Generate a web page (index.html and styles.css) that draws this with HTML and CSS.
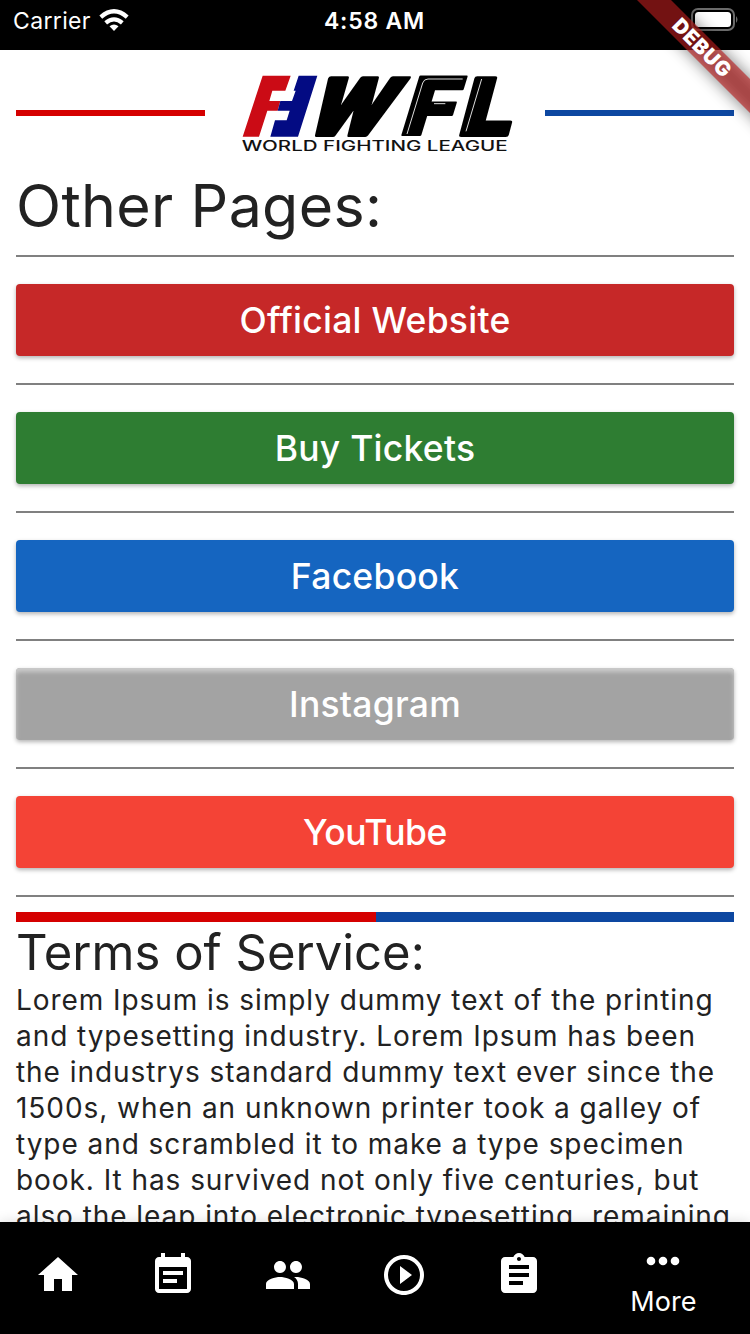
FILE: index.html
```html
<!DOCTYPE html>
<html lang="en">
<head>
<meta charset="utf-8">
<title>World Fighting League</title>
<link rel="stylesheet" href="styles.css">
</head>
<body>
<div class="app">
  <div class="status">
    <div class="carrier"><span>Carrier</span>
      <svg class="wifi" width="30" height="24" viewBox="0 0 30 24"><g fill="none" stroke="#fff" stroke-width="4.3"><path d="M1.800 9.100Q15-2.400 28.200 9.100"/><path d="M6.700 14.800Q15 8 23.300 14.800"/></g><path d="M10.500 18.300Q15 14.700 19.500 18.300L15 23Z" fill="#fff"/></svg>
    </div>
    <div class="time">4:58 AM</div>
    <svg class="battery" width="48" height="24" viewBox="0 0 48 24"><rect x="1" y="1" width="42" height="21" rx="6" fill="none" stroke="#6b6b6b" stroke-width="2"/><rect x="4" y="4" width="36" height="15" rx="3.500" fill="#fff"/><path d="M45 8Q48 11.500 45 15Z" fill="#6b6b6b"/></svg>
  </div>
  <main class="page">
    <header class="brand">
      <div class="rule red"></div>
      <svg class="logo" width="290" height="100" viewBox="0 0 870 300">
        <path d="M98 47H182L166 92H127L118 123H151L143 152H112L87 230H38Z" fill="#cb0b15"/>
        <path d="M206 47H262L204 230H121L135 181H170L179 152H143L151 123H186L197 92H191Z" fill="#030b83"/>
        <g class="mono">
          <text class="heavy" transform="translate(212 224) skewX(-26)" textLength="246" lengthAdjust="spacingAndGlyphs">W</text>
          <text transform="translate(505 226) skewX(-17)" textLength="158" lengthAdjust="spacingAndGlyphs">F</text>
          <text class="heavy" transform="translate(682 224) skewX(-15)" textLength="155" lengthAdjust="spacingAndGlyphs">L</text>
        </g>
        <g class="inline">
          <path d="M698 57H594Q582 57 578 69L531 222"/>
          <path d="M612 131H646"/>
          <path d="M755 57L708 214"/>
        </g>
        <text class="tagline" x="35" y="272" textLength="798" lengthAdjust="spacingAndGlyphs">WORLD FIGHTING LEAGUE</text>
      </svg>
      <div class="rule blue"></div>
    </header>
    <h1>Other Pages:</h1>
    <div class="links">
      <a class="btn website">Official Website</a>
      <a class="btn tickets">Buy Tickets</a>
      <a class="btn facebook">Facebook</a>
      <a class="btn instagram">Instagram</a>
      <a class="btn youtube">YouTube</a>
    </div>
    <div class="split"><i class="red"></i><i class="blue"></i></div>
    <h2>Terms of Service:</h2>
    <p>Lorem Ipsum is simply dummy text of the printing<br>and typesetting industry. Lorem Ipsum has been<br>the industrys standard dummy text ever since the<br>1500s, when an unknown printer took a galley of<br>type and scrambled it to make a type specimen<br>book. It has survived not only five centuries, but<br>also the leap into electronic typesetting, remaining</p>
  </main>
  <nav class="tabs">
    <div class="tab"><svg viewBox="0 0 24 24"><path d="M10 20v-6h4v6h5v-8h3L12 3 2 12h3v8z"/></svg></div>
    <div class="tab"><svg viewBox="0 0 24 24"><path d="M17 10H7v2h10v-2zm2-7h-1V1h-2v2H8V1H6v2H5c-1.110 0-1.990.9-1.990 2L3 19c0 1.100.89 2 2 2h14c1.100 0 2-.9 2-2V5c0-1.100-.9-2-2-2zm0 16H5V8h14v11zm-5-5H7v2h7v-2z"/></svg></div>
    <div class="tab"><svg viewBox="0 0 24 24"><path d="M16 11c1.660 0 2.990-1.340 2.990-3S17.660 5 16 5s-3 1.340-3 3 1.340 3 3 3zm-8 0c1.660 0 2.990-1.340 2.990-3S9.660 5 8 5 5 6.340 5 8s1.340 3 3 3zm0 2c-2.330 0-7 1.170-7 3.500V19h14v-2.500c0-2.330-4.670-3.500-7-3.500zm8 0c-.29 0-.62.020-.97.050 1.160.84 1.970 1.970 1.970 3.450V19h6v-2.500c0-2.330-4.670-3.500-7-3.500z"/></svg></div>
    <div class="tab"><svg viewBox="0 0 24 24"><path d="M10 16.500l6-4.500-6-4.500v9zM12 2C6.480 2 2 6.480 2 12s4.480 10 10 10 10-4.480 10-10S17.520 2 12 2zm0 18c-4.410 0-8-3.590-8-8s3.590-8 8-8 8 3.590 8 8-3.590 8-8 8z"/></svg></div>
    <div class="tab"><svg viewBox="0 0 24 24"><path d="M19 3h-4.180C14.400 1.840 13.300 1 12 1c-1.300 0-2.400.84-2.820 2H5c-1.100 0-2 .9-2 2v14c0 1.100.9 2 2 2h14c1.100 0 2-.9 2-2V5c0-1.100-.9-2-2-2zm-7 0c.55 0 1 .45 1 1s-.45 1-1 1-1-.45-1-1 .45-1 1-1zm2 14H7v-2h7v2zm3-4H7v-2h10v2zm0-4H7V7h10v2z"/></svg></div>
    <div class="tab more"><svg viewBox="0 0 34 10"><circle cx="5" cy="5" r="4.300"/><circle cx="17" cy="5" r="4.300"/><circle cx="29" cy="5" r="4.300"/></svg><span>More</span></div>
  </nav>
  <div class="debug"><span>DEBUG</span></div>
</div>
</body>
</html>
```
FILE: styles.css
```css
body { margin: 0; }
.app { position: relative; width: 750px; height: 1334px; overflow: hidden; display: flex; flex-direction: column; background: #fff; color: #222; font-family: Inter, sans-serif; }
.status { flex: none; box-sizing: border-box; height: 50px; padding: 8px 11px 0 13px; background: #000; color: #fff; display: grid; grid-template-columns: 1fr auto 1fr; align-items: start; line-height: 26px; font-size: 23px; }
.carrier { display: flex; gap: 8px; letter-spacing: .35px; }
.time { font-weight: 600; letter-spacing: .8px; margin-right: 3px; }
.battery { justify-self: end; }
.page { flex: 1; min-height: 0; overflow: hidden; padding: 0 16px; display: flex; flex-direction: column; }
.brand { flex: none; height: 126px; display: flex; align-items: center; }
.brand .rule { height: 6px; width: 189px; flex: none; }
.red { background: #d50000; }
.blue { background: #0d47a1; }
.logo { flex: none; margin: -6px 25px 0; overflow: visible; }
.mono { font: 900 241px Inter, sans-serif; fill: #000; stroke: #000; stroke-width: 6; stroke-linejoin: round; }
.mono .heavy { font-size: 234px; stroke-width: 12; }
.inline { fill: none; stroke: #ddd; stroke-width: 3; }
.tagline { font: 500 42px Inter, sans-serif; fill: #111; }
h1 { flex: none; margin: 0; font-weight: 400; font-size: 59px; line-height: 59px; height: 79px; letter-spacing: .35px; }
.links { flex: none; display: flex; flex-direction: column; gap: 56px; border: solid #808080; border-width: 2px 0; padding: 27px 0; }
.btn { position: relative; height: 72px; border-radius: 4px; color: #fff; font-size: 35.500px; font-weight: 540; line-height: 73px; text-align: center; letter-spacing: .25px; box-shadow: 0 2px 4px rgba(0,0,0,.3); }
.btn:not(:first-child)::before { content: ""; position: absolute; left: 0; right: 0; top: -29px; height: 2px; background: #808080; }
.website { background: #c62828; }
.tickets { background: #2e7d32; }
.facebook { background: #1565c0; }
.instagram { background: #a3a3a3; box-shadow: 0 2px 4px rgba(0,0,0,.3), inset 0 4px 4px #cbcbcb; }
.youtube { background: #f44336; letter-spacing: -.5px; }
.split { flex: none; margin-top: 15px; height: 10px; display: grid; grid-template-columns: 360px 1fr; }
h2 { flex: none; margin: 0; padding-top: 2px; font-size: 49px; line-height: 58px; font-weight: 400; letter-spacing: 0; }
p { flex: none; margin: 0; font-size: 28px; line-height: 36px; letter-spacing: .94px; white-space: nowrap; }
.tabs { flex: none; height: 112px; background: #000; color: #fff; display: flex; align-items: flex-start; box-shadow: 0 0 12px rgba(0,0,0,.15); z-index: 1; }
.tab { flex: 1; display: flex; justify-content: center; padding-top: 29px; }
.tab svg { width: 48px; height: 48px; fill: #fff; }
.tab.more { flex: 1.5; flex-direction: column; align-items: center; gap: 19px; padding-top: 34px; font-size: 27px; line-height: 34px; }
.tab.more svg { width: 34px; height: 10px; }
.more span { letter-spacing: .1px; }
.debug { position: absolute; z-index: 2; left: 582px; top: 36px; width: 240px; height: 24px; transform: rotate(45deg); text-align: center; color: #fff; font-size: 20.400px; line-height: 24px; font-weight: 900; letter-spacing: .6px; }
.debug::before { content: ""; position: absolute; inset: 0; background: rgba(0,0,0,.5); filter: blur(8px); }
.debug span { position: absolute; inset: 0; background: rgba(183,28,28,.627); }
```
